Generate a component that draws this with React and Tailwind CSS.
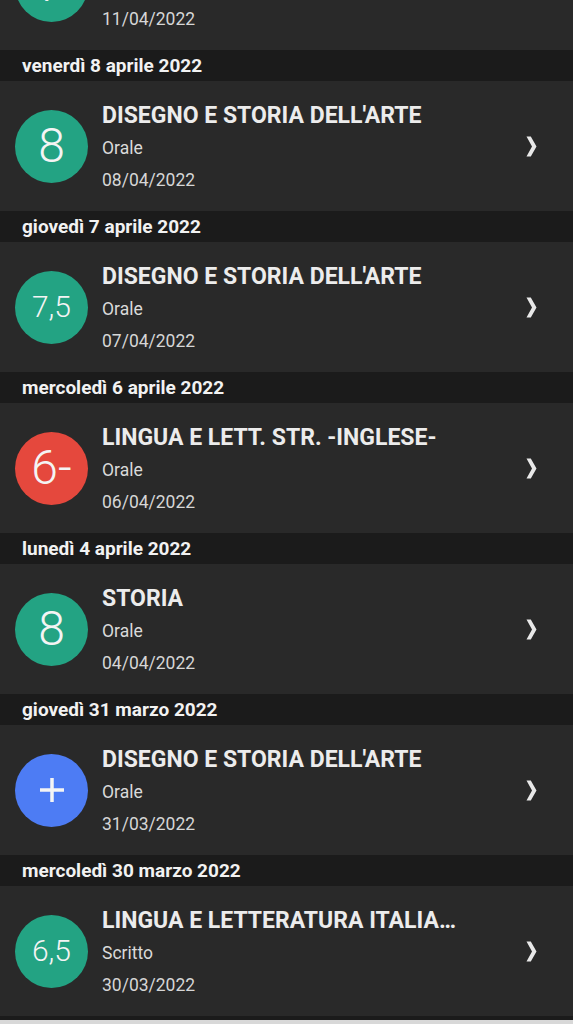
import React from 'react';

const groups = [
  { day: null, subject: 'MATEMATICA', type: 'Orale', date: '11/04/2022', grade: '7', color: 'green' },
  { day: 'venerdì 8 aprile 2022', subject: "DISEGNO E STORIA DELL'ARTE", type: 'Orale', date: '08/04/2022', grade: '8', color: 'green' },
  { day: 'giovedì 7 aprile 2022', subject: "DISEGNO E STORIA DELL'ARTE", type: 'Orale', date: '07/04/2022', grade: '7,5', color: 'green' },
  { day: 'mercoledì 6 aprile 2022', subject: 'LINGUA E LETT. STR. -INGLESE-', type: 'Orale', date: '06/04/2022', grade: '6-', color: 'red' },
  { day: 'lunedì 4 aprile 2022', subject: 'STORIA', type: 'Orale', date: '04/04/2022', grade: '8', color: 'green' },
  { day: 'giovedì 31 marzo 2022', subject: "DISEGNO E STORIA DELL'ARTE", type: 'Orale', date: '31/03/2022', grade: '+', color: 'blue' },
  { day: 'mercoledì 30 marzo 2022', subject: 'LINGUA E LETTERATURA ITALIANA', type: 'Scritto', date: '30/03/2022', grade: '6,5', color: 'green' },
];

const circleColors = {
  green: 'bg-[#23a383]',
  red: 'bg-[#e5483d]',
  blue: 'bg-[#4d7cf4]',
};

function GradeCircle({ grade, color }) {
  if (grade === '+') {
    return (
      <div className={`w-[73px] h-[73px] rounded-full flex items-center justify-center shrink-0 ${circleColors[color]}`}>
        <svg width="26" height="26" viewBox="0 0 26 26">
          <path d="M13 1v24M1 13h24" stroke="#f4f4f4" strokeWidth="3.5" />
        </svg>
      </div>
    );
  }
  const size = grade.length > 2 ? 'text-[30px]' : 'text-[48px]';
  return (
    <div className={`w-[73px] h-[73px] rounded-full flex items-center justify-center shrink-0 text-[#f4f4f4] font-light leading-none ${size} ${circleColors[color]}`}>
      {grade}
    </div>
  );
}

function Chevron() {
  return (
    <svg width="11" height="21" viewBox="0 0 11 21" className="shrink-0">
      <path d="M0.5 0.5 L4.8 0.5 L10.5 10.5 L4.8 20.5 L0.5 20.5 L6 10.5 Z" fill="#e8e8e8" />
    </svg>
  );
}

function GradeRow({ item }) {
  return (
    <div className="h-[130px] bg-[#292929] flex items-center pl-[15px] pr-[36px]">
      <GradeCircle grade={item.grade} color={item.color} />
      <div className="flex-1 min-w-0 pl-[14px] pr-[64px] pt-[3px]">
        <p className="leading-[32px] text-[23px] font-bold text-[#ececec] truncate">{item.subject}</p>
        <p className="leading-[32px] text-[17.5px] text-[#dadada]">{item.type}</p>
        <p className="leading-[32px] text-[17.5px] text-[#d6d6d6]">{item.date}</p>
      </div>
      <Chevron />
    </div>
  );
}

export default function App() {
  return (
    <div className="w-[573px] h-[1024px] overflow-hidden bg-[#d8d8d8] font-['Roboto',sans-serif]">
      <div className="-mt-[80px]">
        {groups.map((g, i) => (
          <div key={i}>
            {g.day && (
              <div className="h-[31px] bg-[#1b1b1b] flex items-center pl-[22px] pt-[2px] text-[19px] font-bold text-[#f2f2f2]">
                {g.day}
              </div>
            )}
            <GradeRow item={g} />
          </div>
        ))}
        <div className="h-[4px] bg-[#1b1b1b]" />
      </div>
    </div>
  );
}
